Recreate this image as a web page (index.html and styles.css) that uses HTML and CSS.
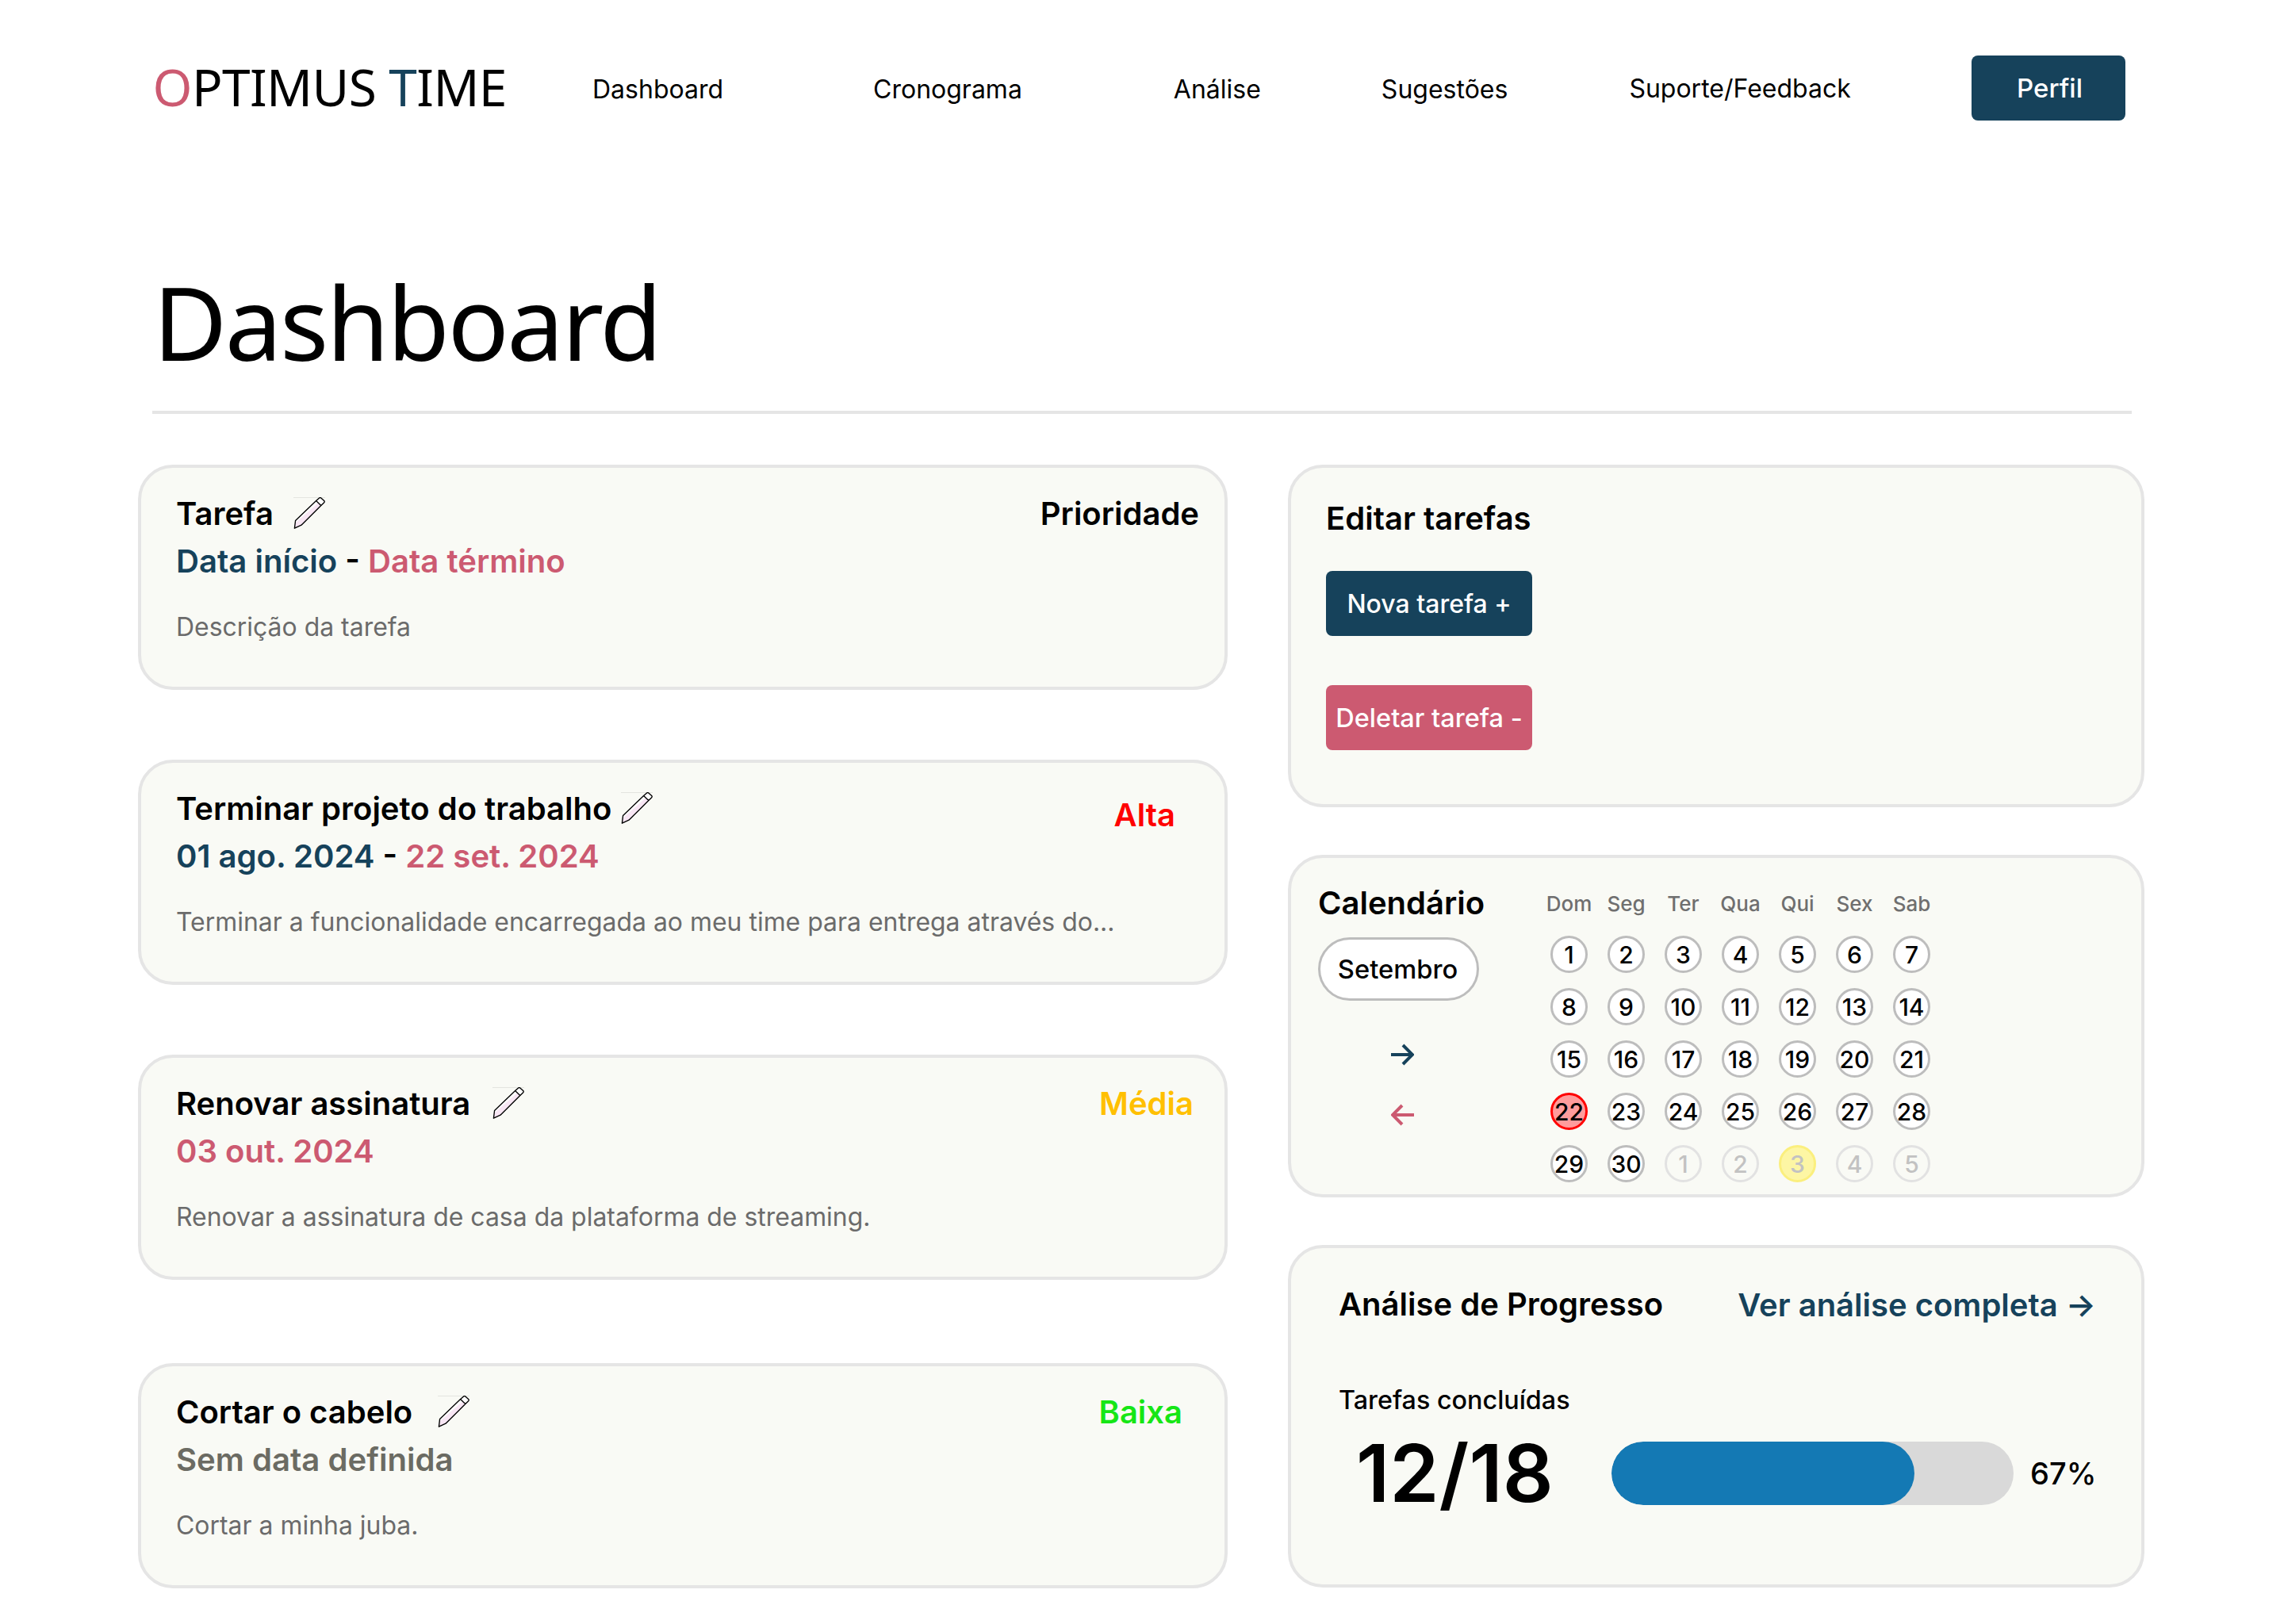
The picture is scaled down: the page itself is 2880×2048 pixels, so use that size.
FILE: index.html
```html
<!DOCTYPE html>
<html lang="pt-BR">
<head>
<meta charset="utf-8">
<title>Optimus Time - Dashboard</title>
<link rel="stylesheet" href="styles.css">
</head>
<body>
<svg class="sprites" width="0" height="0" aria-hidden="true">
  <symbol id="pencil" viewBox="0 0 40 40">
    <path d="M0 .4h40" stroke="#dcdcd8" stroke-width=".8" fill="none"/>
    <path d="M2.6 29.4 28.6 4.6l4-3.6c.7-.6 1.5-.6 2.2 0l3.9 3.5c.7.7.7 1.5 0 2.2l-3.9 3.9L10 35.2 1.4 39.2z" fill="#fff"/>
    <path d="M31 7.5 35 10.6 10 35.2 1.4 39.2 2 33z" fill="#f8e6f4"/>
    <path d="M2.6 29.4 28.6 4.6l4-3.6c.7-.6 1.5-.6 2.2 0l3.9 3.5c.7.7.7 1.5 0 2.2l-3.9 3.9L10 35.2 1.4 39.2zM28.6 4.6l6.2 6M2.6 29.4 1.4 39.2" fill="none" stroke="#000" stroke-width="1.35" stroke-linejoin="round"/>
  </symbol>
</svg>
<div class="page">
  <header class="topbar">
    <div class="logo"><span class="rose">O</span>PTIMUS <span class="navy">T</span>IME</div>
    <nav class="nav">
      <a class="nav-link nav-dashboard">Dashboard</a>
      <a class="nav-link nav-cronograma">Cronograma</a>
      <a class="nav-link nav-analise">Análise</a>
      <a class="nav-link nav-sugestoes">Sugestões</a>
      <a class="nav-link nav-suporte">Suporte/Feedback</a>
    </nav>
    <button class="btn btn-navy btn-perfil">Perfil</button>
  </header>

  <h1 class="page-title">Dashboard</h1>
  <hr class="divider">

  <main class="columns">
    <section class="tasks">
      <article class="card task">
        <div class="task-head">
          <div class="task-title"><span>Tarefa</span><svg class="pencil pencil-a"><use href="#pencil"/></svg></div>
          <span class="priority prio-header">Prioridade</span>
        </div>
        <div class="task-dates"><span class="navy">Data início</span> - <span class="rose">Data término</span></div>
        <p class="task-desc">Descrição da tarefa</p>
      </article>

      <article class="card task">
        <div class="task-head">
          <div class="task-title"><span>Terminar projeto do trabalho</span><svg class="pencil pencil-b"><use href="#pencil"/></svg></div>
          <span class="priority prio-alta">Alta</span>
        </div>
        <div class="task-dates"><span class="navy">01 ago. 2024</span> - <span class="rose">22 set. 2024</span></div>
        <p class="task-desc">Terminar a funcionalidade encarregada ao meu time para entrega através do...</p>
      </article>

      <article class="card task">
        <div class="task-head">
          <div class="task-title"><span>Renovar assinatura</span><svg class="pencil pencil-c"><use href="#pencil"/></svg></div>
          <span class="priority prio-media">Média</span>
        </div>
        <div class="task-dates"><span class="rose">03 out. 2024</span></div>
        <p class="task-desc">Renovar a assinatura de casa da plataforma de streaming.</p>
      </article>

      <article class="card task task-last">
        <div class="task-head">
          <div class="task-title"><span>Cortar o cabelo</span><svg class="pencil pencil-d"><use href="#pencil"/></svg></div>
          <span class="priority prio-baixa">Baixa</span>
        </div>
        <div class="task-dates muted">Sem data definida</div>
        <p class="task-desc">Cortar a minha juba.</p>
      </article>
    </section>

    <aside class="side">
      <section class="card side-card edit-card">
        <h2 class="card-title">Editar tarefas</h2>
        <button class="btn btn-navy btn-action btn-new">Nova tarefa +</button>
        <button class="btn btn-rose btn-action btn-delete">Deletar tarefa -</button>
      </section>

      <section class="card side-card calendar-card">
        <div class="cal-side">
          <h2 class="card-title">Calendário</h2>
          <div class="month-pill">Setembro</div>
          <svg class="arrow arrow-next" viewBox="0 0 30 28"><path d="M1 14h27M16 2l12 12-12 12" fill="none" stroke="#16425b" stroke-width="4"/></svg>
          <svg class="arrow arrow-prev" viewBox="0 0 30 28"><path d="M29 14H2M14 2 2 14l12 12" fill="none" stroke="#cc5a71" stroke-width="4"/></svg>
        </div>
        <div class="cal-grid">
          <span class="wd">Dom</span><span class="wd">Seg</span><span class="wd">Ter</span><span class="wd">Qua</span><span class="wd">Qui</span><span class="wd">Sex</span><span class="wd">Sab</span>
          <span class="day">1</span><span class="day">2</span><span class="day">3</span><span class="day">4</span><span class="day">5</span><span class="day">6</span><span class="day">7</span>
          <span class="day">8</span><span class="day">9</span><span class="day">10</span><span class="day">11</span><span class="day">12</span><span class="day">13</span><span class="day">14</span>
          <span class="day">15</span><span class="day">16</span><span class="day">17</span><span class="day">18</span><span class="day">19</span><span class="day">20</span><span class="day">21</span>
          <span class="day day-deadline">22</span><span class="day">23</span><span class="day">24</span><span class="day">25</span><span class="day">26</span><span class="day">27</span><span class="day">28</span>
          <span class="day">29</span><span class="day">30</span><span class="day day-out">1</span><span class="day day-out">2</span><span class="day day-out day-today">3</span><span class="day day-out">4</span><span class="day day-out">5</span>
        </div>
      </section>

      <section class="card side-card progress-card">
        <div class="progress-head">
          <h2 class="card-title">Análise de Progresso</h2>
          <a class="progress-link">Ver análise completa →</a>
        </div>
        <div class="progress-label">Tarefas concluídas</div>
        <div class="progress-row">
          <span class="progress-count">12/18</span>
          <div class="bar"><div class="bar-fill"></div></div>
          <span class="progress-pct">67%</span>
        </div>
      </section>
    </aside>
  </main>
</div>
</body>
</html>
```

FILE: styles.css
```css
* { box-sizing: border-box; }
html, body { margin: 0; background: #fff; }
body { font-family: Inter, "Liberation Sans", sans-serif; color: #000; }
.sprites { position: absolute; }
.page { width: 2880px; height: 2048px; overflow: hidden; padding: 70px 176px 0 174px; }
.rose { color: #cc5a71; }
.navy { color: #16425b; }
.muted { color: #6b6b63; }

.topbar { display: flex; align-items: center; height: 82px; }
.logo { font-family: "Noto Sans", "Open Sans", sans-serif; font-size: 64px; width: 573px; padding: 0 0 4px 18.5px; letter-spacing: -0.6px; white-space: nowrap; }
.nav { display: flex; flex: 1; align-items: center; }
.nav-link { font-size: 32px; padding-top: 2px; white-space: nowrap; }
.nav-cronograma { margin-left: 189px; }
.nav-analise { margin-left: 191px; }
.nav-sugestoes { margin-left: 152px; }
.nav-suporte { margin-left: 153px; padding-top: 0; }
.btn { display: block; border: 0; border-radius: 8px; color: #fff; font: 500 32px Inter, sans-serif; text-align: center; padding: 0; }
.btn-navy { background: #16425b; }
.btn-rose { background: #cc5a71; }
.btn-perfil { width: 194px; height: 82px; margin-right: 24px; padding-left: 3px; font-size: 33px; }

.page-title { font-family: "Noto Sans", "Open Sans", sans-serif; font-weight: 400; font-size: 128px; line-height: 174px; margin: 167px 0 0 19px; letter-spacing: -2.6px; }
.divider { height: 4px; border: 0; background: #e5e5e5; margin: 25px 0 0 18px; width: 2496px; }

.columns { display: grid; grid-template-columns: 1374px 1080px; column-gap: 76px; margin-top: 64px; }
.tasks { display: flex; flex-direction: column; gap: 88px; }
.side { display: flex; flex-direction: column; gap: 60px; }
.card { background: #f9faf5; border: 4px solid #e5e5e5; border-radius: 44px; }

.task { height: 284px; padding: 30px 32px 0 44px; }
.task-last { margin-top: 17px; }
.task-head { display: flex; justify-content: space-between; align-items: flex-start; height: 58px; }
.task-title { display: flex; align-items: center; font-size: 40px; font-weight: 600; height: 54px; }
.pencil { width: 40px; height: 40px; flex: none; }
.pencil-a { margin-left: 25px; }
.pencil-b { margin-left: 12px; }
.pencil-c { margin-left: 28px; }
.pencil-d { margin-left: 32px; }
.priority { font-size: 40px; font-weight: 600; line-height: 54px; }
.prio-header { margin-top: 1px; }
.prio-alta { color: #ff0000; margin: 9px 30px 0 0; }
.prio-media { color: #ffc000; margin: 1px 7px 0 0; }
.prio-baixa { color: #16e616; margin: 1px 21px 0 0; }
.task-dates { font-size: 40.1px; font-weight: 600; line-height: 60px; }
.task-desc { margin: 31px 0 0; font-size: 31.95px; line-height: 44px; color: #6b6b6b; }

.side-card { height: 432px; }
.card-title { margin: 0; font-size: 40px; font-weight: 600; line-height: 54px; }
.edit-card { padding: 37px 0 0 44px; }
.btn-action { width: 260px; height: 82px; }
.btn-delete { font-size: 32.5px; }
.btn-new { margin-top: 39px; margin-bottom: 62px; }

.calendar-card { display: flex; padding: 30px 0 0 34px; }
.cal-side { width: 293px; flex: none; }
.month-pill { width: 203px; height: 80px; margin-top: 16px; padding-right: 2px; border: 3px solid #bdbdbd; border-radius: 40px; background: #fff; font-size: 32.7px; font-weight: 500; display: flex; align-items: center; justify-content: center; }
.arrow { display: block; width: 30px; height: 28px; }
.arrow-next { margin: 54px 0 0 91px; }
.arrow-prev { margin: 48px 0 0 92px; }
.cal-grid { display: grid; grid-template-columns: repeat(7, 47px); column-gap: 25px; grid-template-rows: 43px repeat(5, 47px); row-gap: 19px; margin-top: 6px; height: 0; }
.wd { font-size: 26px; font-weight: 500; color: #6f6f6f; display: flex; align-items: center; justify-content: center; white-space: nowrap; }
.day { border: 3px solid #bdbdbd; border-radius: 50%; background: #fff; font-size: 30px; font-weight: 500; display: flex; align-items: center; justify-content: center; }
.day-deadline { background: #ff9c9c; border-color: #f00; }
.day-out { color: #c2c2c2; background: transparent; border-color: #e2e2e2; }
.day-today { background: #fdf6a4; border-color: #fbef7e; }

.progress-card { padding: 44px 57px 0 60px; }
.progress-head { display: flex; justify-content: space-between; align-items: center; }
.progress-link { font-size: 40px; font-weight: 600; color: #16425b; white-space: nowrap; }
.progress-label { margin-top: 72px; font-size: 32.3px; font-weight: 500; line-height: 44px; }
.progress-row { display: flex; align-items: center; margin-top: 9px; }
.progress-count { font-size: 100px; font-weight: 600; width: 344px; padding-left: 22px; flex: none; }
.bar { width: 507px; height: 80px; border-radius: 40px; background: #d9d9d9; overflow: hidden; flex: none; }
.bar-fill { width: 382px; height: 100%; border-radius: 40px; background: #1479b4; }
.progress-pct { margin-left: 21px; font-size: 38px; font-weight: 500; }
```
